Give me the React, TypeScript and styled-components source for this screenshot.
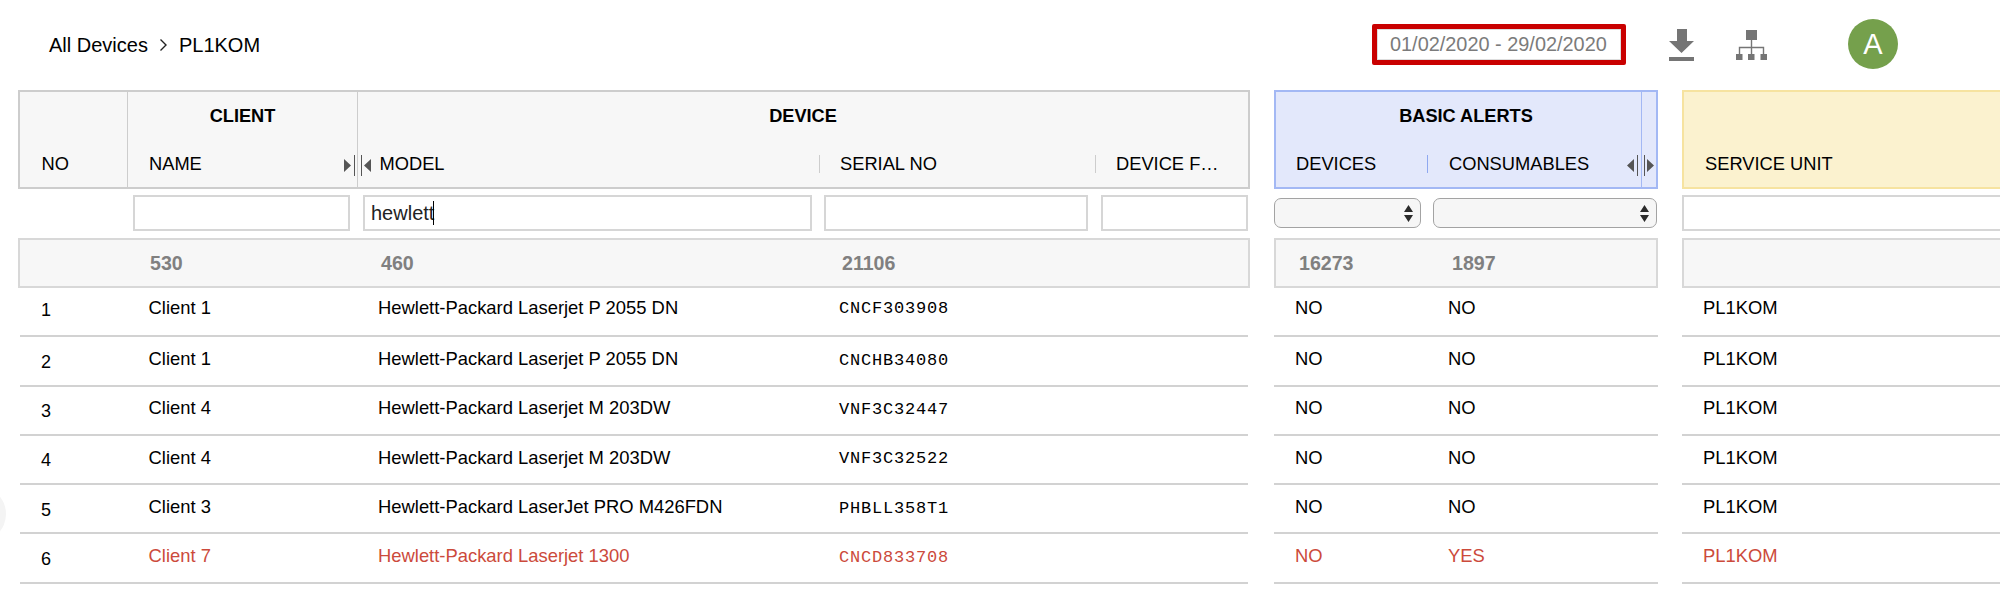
import styled, { createGlobalStyle } from "styled-components";

const RED = "#cc4a3b";
const LINE = "#d2d2d2";

const rows = [
  { no: 1, client: "Client 1", model: "Hewlett-Packard Laserjet P 2055 DN", serial: "CNCF303908", devices: "NO", consumables: "NO" },
  { no: 2, client: "Client 1", model: "Hewlett-Packard Laserjet P 2055 DN", serial: "CNCHB34080", devices: "NO", consumables: "NO" },
  { no: 3, client: "Client 4", model: "Hewlett-Packard Laserjet M 203DW", serial: "VNF3C32447", devices: "NO", consumables: "NO" },
  { no: 4, client: "Client 4", model: "Hewlett-Packard Laserjet M 203DW", serial: "VNF3C32522", devices: "NO", consumables: "NO" },
  { no: 5, client: "Client 3", model: "Hewlett-Packard LaserJet PRO M426FDN", serial: "PHBLL358T1", devices: "NO", consumables: "NO" },
  { no: 6, client: "Client 7", model: "Hewlett-Packard Laserjet 1300", serial: "CNCD833708", devices: "NO", consumables: "YES", alert: true },
];

const tones = {
  gray: { bg: "#f7f7f7", line: "#cdcdcd" },
  blue: { bg: "#e3e8fb", line: "#a3b8f4" },
  yellow: { bg: "#fbf2cf", line: "#f6e3a0" },
};

type Tone = keyof typeof tones;

const GlobalStyle = createGlobalStyle`
  html, body {
    margin: 0;
    background: #fff;
    overflow: hidden;
  }
  * {
    box-sizing: border-box;
  }
`;

const Page = styled.div`
  position: relative;
  width: 2000px;
  height: 593px;
  overflow: hidden;
  font-family: "Liberation Sans", Arial, sans-serif;
  color: #000;
`;

const TopBar = styled.header`
  height: 90px;
  display: flex;
  align-items: center;
  padding: 0 102px 0 49px;
`;

const Crumbs = styled.div`
  display: flex;
  align-items: center;
  gap: 11px;
  font-size: 20px;
  flex: 1;
`;

const DateBox = styled.div`
  width: 254px;
  height: 41px;
  margin-top: -2px;
  border: 5px solid #c90000;
  border-radius: 2px;
  box-shadow: inset 0 0 0 1px #ddd;
  display: flex;
  align-items: center;
  padding-left: 13px;
  font-size: 19.9px;
  color: #7b7b7b;
`;

const ToolIcon = styled.svg<{ $gap: number }>`
  display: block;
  margin-left: ${(p) => p.$gap}px;
  margin-top: -1px;
  fill: #757575;
  stroke: #757575;
`;

const Avatar = styled.div`
  width: 50px;
  height: 50px;
  margin-left: 81px;
  margin-top: -2px;
  border-radius: 50%;
  background: #75a04c;
  color: #fff;
  font-size: 29px;
  display: flex;
  align-items: center;
  justify-content: center;
`;

const Band = styled.div`
  display: grid;
  grid-template-columns: 1232px 384px 1fr;
  column-gap: 24px;
  width: 2010px;
  padding-left: 18px;
`;

const Group = styled.div`
  display: flex;
  min-width: 0;
`;

const HeadGroup = styled(Group)<{ $tone: Tone }>`
  position: relative;
  height: 99px;
  background: ${(p) => tones[p.$tone].bg};
  border: 2px solid ${(p) => tones[p.$tone].line};
`;

const HeadCol = styled.div<{ $w?: number; $divider?: boolean }>`
  display: flex;
  flex-direction: column;
  justify-content: flex-end;
  flex: ${(p) => (p.$w ? `0 0 ${p.$w}px` : "1")};
  min-width: 0;
  border-right: ${(p) => (p.$divider ? `1px solid #cdcdcd` : "none")};
`;

const Title = styled.div`
  height: 46px;
  padding-top: 3px;
  display: flex;
  align-items: center;
  justify-content: center;
  font-size: 18.2px;
  font-weight: 700;
`;

const Labels = styled.div`
  height: 49px;
  padding-top: 2px;
  display: flex;
  align-items: center;
`;

const Label = styled.div<{ $w?: number; $pl: number; $sep?: string }>`
  flex: ${(p) => (p.$w ? `0 0 ${p.$w}px` : "1")};
  height: 18px;
  display: flex;
  align-items: center;
  padding-left: ${(p) => p.$pl}px;
  font-size: 18.3px;
  white-space: nowrap;
  border-left: ${(p) => (p.$sep ? `1px solid ${p.$sep}` : "none")};
`;

const Splitter = styled.svg<{ $left: number }>`
  position: absolute;
  left: ${(p) => p.$left}px;
  top: 63px;
  fill: #555;
  stroke: #555;
`;

const PinnedRule = styled.div<{ $left: number; $color: string }>`
  position: absolute;
  left: ${(p) => p.$left}px;
  top: 0;
  bottom: 0;
  width: 1px;
  background: ${(p) => p.$color};
`;

const FilterBand = styled(Band)`
  margin-top: 6px;
  height: 36px;
`;

const FilterCell = styled.div<{ $w?: number; $pl?: number; $pr?: number }>`
  flex: ${(p) => (p.$w ? `0 0 ${p.$w}px` : "1")};
  min-width: 0;
  display: flex;
  align-items: center;
  padding-left: ${(p) => p.$pl ?? 0}px;
  padding-right: ${(p) => p.$pr ?? 0}px;
`;

const FilterBox = styled.div`
  width: 100%;
  height: 36px;
  background: #fff;
  border: 2px solid #d6d6d6;
  display: flex;
  align-items: center;
  padding-left: 6px;
  font-size: 20px;
  color: #222;
`;

const Caret = styled.span`
  width: 1px;
  height: 24px;
  background: #000;
  margin-left: -1px;
`;

const SelectWrap = styled.div`
  position: relative;
  flex: 1;
  height: 30px;
`;

const FilterSelect = styled.select`
  appearance: none;
  display: block;
  width: 100%;
  height: 100%;
  border: 1.5px solid #a3a3a3;
  border-radius: 7px;
  background: #f6f6f6;
`;

const SelectArrows = styled.svg`
  position: absolute;
  right: 8px;
  top: 7px;
  fill: #2b2b2b;
  pointer-events: none;
`;

const TotalsBand = styled(Band)`
  margin-top: 7px;
`;

const TotalsGroup = styled(Group)`
  height: 50px;
  align-items: center;
  background: #f7f7f7;
  border: 2px solid #d8d8d8;
`;

const Total = styled.div<{ $w: number; $pl?: number }>`
  flex: 0 0 ${(p) => p.$w}px;
  padding-left: ${(p) => p.$pl ?? 0}px;
  font-size: 19.6px;
  font-weight: 700;
  color: #808080;
`;

const RowBand = styled(Band)`
  height: 49.3px;
  &:first-of-type > div {
    padding-bottom: 7.5px;
  }
`;

const RowGroup = styled(Group)<{ $alert?: boolean }>`
  align-items: center;
  padding-bottom: 3.5px;
  border-bottom: 2px solid ${LINE};
  color: ${(p) => (p.$alert ? RED : "#000")};
  &:first-child {
    margin: 0 2px;
  }
`;

const RowCell = styled.div<{ $w?: number; $pl: number; $size?: number }>`
  flex: ${(p) => (p.$w ? `0 0 ${p.$w}px` : "1")};
  padding-left: ${(p) => p.$pl}px;
  font-size: ${(p) => p.$size ?? 18.4}px;
  white-space: nowrap;
`;

const IndexCell = styled(RowCell)`
  padding-top: 6px;
  font-size: 18px;
  color: #000;
`;

const SerialCell = styled(RowCell)`
  padding-top: 2px;
  font-family: "Liberation Mono", "Courier New", monospace;
  font-size: 17px;
  letter-spacing: 0.8px;
`;

const EdgeBlob = styled.div`
  position: absolute;
  left: -50px;
  top: 486px;
  width: 56px;
  height: 56px;
  border-radius: 50%;
  background: #f4f4f4;
`;

function SplitHandle({ left, outward }: { left: number; outward?: boolean }) {
  return (
    <Splitter $left={left} width="27" height="21" viewBox="0 0 27 21">
      {outward ? (
        <path d="M7 4 L0 10.5 L7 17 Z M20 4 L27 10.5 L20 17 Z" stroke="none" />
      ) : (
        <path d="M0 4 L7 10.5 L0 17 Z M27 4 L20 10.5 L27 17 Z" stroke="none" />
      )}
      <path d="M10.5 0 V21 M17.5 0 V21" fill="none" strokeWidth="1" />
    </Splitter>
  );
}

function Selector() {
  return (
    <SelectWrap>
      <FilterSelect />
      <SelectArrows width="9" height="17" viewBox="0 0 9 17">
        <path d="M4.5 0 L9 7 H0 Z M0 10 H9 L4.5 17 Z" />
      </SelectArrows>
    </SelectWrap>
  );
}

export default function App() {
  return (
    <Page>
      <GlobalStyle />
      <TopBar>
        <Crumbs>
          <span>All Devices</span>
          <svg width="9" height="14" viewBox="0 0 9 14" fill="none" stroke="#222" strokeWidth="1.4">
            <path d="M1.5 1.5 L7 7 L1.5 12.5" />
          </svg>
          <span>PL1KOM</span>
        </Crumbs>
        <DateBox>01/02/2020 - 29/02/2020</DateBox>
        <ToolIcon $gap={43} width="25" height="32" viewBox="0 0 25 32" stroke="none">
          <path d="M8 0 H18 V12 H25 L12.5 24 L0 12 H8 Z M0 28 H25 V32 H0 Z" stroke="none" />
        </ToolIcon>
        <ToolIcon $gap={42} width="31" height="30" viewBox="0 0 31 30">
          <path d="M10 0 H21 V10 H10 Z M0 24 H6.5 V30 H0 Z M12 24 H18.5 V30 H12 Z M24.5 24 H31 V30 H24.5 Z" stroke="none" />
          <path d="M15.5 10 V24 M3.5 24 V17.5 H27.5 V24" fill="none" strokeWidth="1.4" />
        </ToolIcon>
        <Avatar>A</Avatar>
      </TopBar>

      <Band>
        <HeadGroup $tone="gray">
          <HeadCol $w={108} $divider>
            <Labels>
              <Label $pl={21.5}>NO</Label>
            </Labels>
          </HeadCol>
          <HeadCol $w={230} $divider>
            <Title>CLIENT</Title>
            <Labels>
              <Label $pl={21}>NAME</Label>
            </Labels>
          </HeadCol>
          <HeadCol>
            <Title>DEVICE</Title>
            <Labels>
              <Label $w={461} $pl={21.5}>MODEL</Label>
              <Label $w={276} $pl={20} $sep="#cdcdcd">SERIAL NO</Label>
              <Label $pl={20} $sep="#cdcdcd">DEVICE F…</Label>
            </Labels>
          </HeadCol>
          <SplitHandle left={324} />
        </HeadGroup>
        <HeadGroup $tone="blue">
          <HeadCol>
            <Title>BASIC ALERTS</Title>
            <Labels>
              <Label $w={151} $pl={20}>DEVICES</Label>
              <Label $pl={21} $sep="#8fa8f0">CONSUMABLES</Label>
            </Labels>
          </HeadCol>
          <PinnedRule $left={365} $color="#a3b8f4" />
          <SplitHandle left={351} outward />
        </HeadGroup>
        <HeadGroup $tone="yellow">
          <HeadCol>
            <Labels>
              <Label $pl={21}>SERVICE UNIT</Label>
            </Labels>
          </HeadCol>
        </HeadGroup>
      </Band>

      <FilterBand>
        <Group>
          <FilterCell $w={109} />
          <FilterCell $w={230} $pl={6} $pr={7}>
            <FilterBox />
          </FilterCell>
          <FilterCell $w={462} $pl={6} $pr={7}>
            <FilterBox>
              hewlett
              <Caret />
            </FilterBox>
          </FilterCell>
          <FilterCell $w={276} $pl={5} $pr={7}>
            <FilterBox />
          </FilterCell>
          <FilterCell $pl={6} $pr={2}>
            <FilterBox />
          </FilterCell>
        </Group>
        <Group>
          <FilterCell $w={159} $pr={12}>
            <Selector />
          </FilterCell>
          <FilterCell $pr={1}>
            <Selector />
          </FilterCell>
        </Group>
        <Group>
          <FilterCell>
            <FilterBox />
          </FilterCell>
        </Group>
      </FilterBand>

      <TotalsBand>
        <TotalsGroup>
          <Total $w={107} />
          <Total $w={230} $pl={23}>530</Total>
          <Total $w={462} $pl={24}>460</Total>
          <Total $w={276} $pl={23}>21106</Total>
        </TotalsGroup>
        <TotalsGroup>
          <Total $w={151} $pl={23}>16273</Total>
          <Total $w={200} $pl={25}>1897</Total>
        </TotalsGroup>
        <TotalsGroup />
      </TotalsBand>

      <div>
        {rows.map((row) => (
          <RowBand key={row.no}>
            <RowGroup $alert={row.alert}>
              <IndexCell $w={107} $pl={21}>{row.no}</IndexCell>
              <RowCell $w={230} $pl={21.6}>{row.client}</RowCell>
              <RowCell $w={462} $pl={21}>{row.model}</RowCell>
              <SerialCell $w={276} $pl={20}>{row.serial}</SerialCell>
            </RowGroup>
            <RowGroup $alert={row.alert}>
              <RowCell $w={153} $pl={21}>{row.devices}</RowCell>
              <RowCell $pl={21}>{row.consumables}</RowCell>
            </RowGroup>
            <RowGroup $alert={row.alert}>
              <RowCell $pl={21}>PL1KOM</RowCell>
            </RowGroup>
          </RowBand>
        ))}
      </div>

      <EdgeBlob />
    </Page>
  );
}
